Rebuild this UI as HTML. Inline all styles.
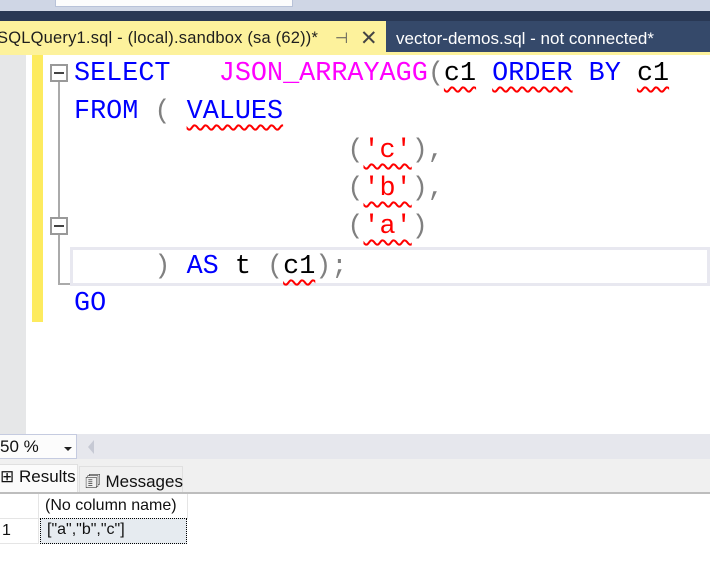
<!DOCTYPE html>
<html><head><style>
body{margin:0;width:710px;height:579px;overflow:hidden;background:#fff;position:relative;font-family:"Liberation Sans",sans-serif}
div{position:absolute;box-sizing:border-box}
.code{font-family:"Liberation Mono",monospace;font-size:26.8px;white-space:pre;left:74px;height:38px;line-height:38px;color:#000}
.k{color:#0000ff}.f{color:#ff00ff}.p{color:#808080}.s{color:#ff0000}
.w{text-decoration:underline wavy #ff0000;text-decoration-thickness:1.5px;text-underline-offset:6px}
</style></head><body>
<div style="left:0;top:0;width:710px;height:11px;background:#cfd6e5"></div>
<div style="left:55px;top:-2px;width:238px;height:9px;background:#fcfcfc;border:1px solid #b8c2d8"></div>
<div style="left:0;top:11px;width:710px;height:10px;background:#293854"></div>
<div style="left:0;top:21px;width:710px;height:34px;background:#35496a"></div>
<div style="left:0;top:21px;width:386px;height:34px;background:#fdf29c"></div>
<div style="top:29px;color:#1e1e1e;font-size:16.5px;letter-spacing:0.2px;white-space:pre;left:-3px">SQLQuery1.sql - (local).sandbox (sa (62))*</div>
<div style="left:335px;top:29px;color:#555;font-size:15px">⊣</div>
<div style="left:360px;top:26px;color:#444;font-size:21px">✕</div>
<div style="left:396px;top:29px;color:#fff;font-size:17px;white-space:pre">vector-demos.sql - not connected*</div>
<div style="left:0;top:52px;width:710px;height:3px;background:#fdf29c"></div>
<div style="left:0;top:55px;width:26px;height:379px;background:#e6e7e8"></div>
<div style="left:32px;top:55px;width:11px;height:267px;background:#fdeb5f"></div>
<div style="left:70px;top:247px;width:640px;height:39px;border:3px solid #e8e8f0"></div>
<div style="left:50px;top:64px;width:18px;height:18px;border:2px solid #999;background:#fff"></div>
<div style="left:54px;top:72px;width:10px;height:2px;background:#444"></div>
<div style="left:58px;top:82px;width:2px;height:135px;background:#aaa"></div>
<div style="left:50px;top:217px;width:18px;height:18px;border:2px solid #999;background:#fff"></div>
<div style="left:54px;top:225px;width:10px;height:2px;background:#444"></div>
<div style="left:58px;top:235px;width:2px;height:50px;background:#aaa"></div>
<div style="left:58px;top:283px;width:12px;height:2px;background:#aaa"></div>
<div class="code" style="top:55px"><span class="k">SELECT</span>   <span class="f">JSON_ARRAYAGG</span><span class="p">(</span><span class="w">c1</span> <span class="k w">ORDER</span> <span class="k">BY</span> <span class="w">c1</span></div>
<div class="code" style="top:93px"><span class="k">FROM</span> <span class="p">(</span> <span class="k w">VALUES</span></div>
<div class="code" style="top:132px">                 <span class="p">(</span><span class="s w">'c'</span><span class="p">),</span></div>
<div class="code" style="top:170px">                 <span class="p">(</span><span class="s w">'b'</span><span class="p">),</span></div>
<div class="code" style="top:208px">                 <span class="p">(</span><span class="s w">'a'</span><span class="p">)</span></div>
<div class="code" style="top:248px">     <span class="p">)</span> <span class="k">AS</span> t <span class="p">(</span><span class="w">c1</span><span class="p">);</span></div>
<div class="code" style="top:285px"><span class="k">GO</span></div>
<div style="left:0;top:434px;width:710px;height:25px;background:#e6e7ed"></div>
<div style="left:-2px;top:434px;width:79px;height:25px;background:#fcfcfc;border:1px solid #c5cbe0"></div>
<div style="left:0;top:437px;font-size:17px;color:#111">50 %</div>
<div style="left:64px;top:447px;width:0;height:0;border-left:4px solid transparent;border-right:4px solid transparent;border-top:4px solid #222"></div>
<div style="left:88px;top:440px;width:0;height:0;border-top:7px solid transparent;border-bottom:7px solid transparent;border-right:6px solid #c6c9d4"></div>
<div style="left:0;top:459px;width:710px;height:33px;background:#f0f0f0"></div>
<div style="left:-2px;top:464px;width:80px;height:28px;background:#fbfbfb;border:1px solid #e0e0e0;border-bottom:none"></div>
<div style="left:0;top:467px;font-size:17px;color:#111">⊞ Results</div>
<div style="left:79px;top:466px;width:104px;height:26px;background:#f0f0f0;border:1px solid #e0e0e0;border-bottom:none"></div>
<div style="left:85px;top:469px;font-size:17px;color:#111">🗊 Messages</div>
<div style="left:0;top:492px;width:710px;height:2px;background:#bdbdbd"></div>
<div style="left:0;top:494px;width:188px;height:25px;border-right:1px solid #e5e5e5;border-bottom:1px solid #e5e5e5"></div>
<div style="left:38px;top:494px;width:1px;height:50px;background:#e5e5e5"></div>
<div style="left:45px;top:497px;font-size:16px;color:#111">(No column name)</div>
<div style="left:0;top:543px;width:39px;height:1px;background:#e5e5e5"></div>
<div style="left:2px;top:522px;font-size:16px;color:#111">1</div>
<div style="left:40px;top:518px;width:147px;height:26px;background:#e6ebf0;border:1px dotted #000"></div>
<div style="left:47px;top:521px;font-size:16px;color:#111">["a","b","c"]</div>
</body></html>
